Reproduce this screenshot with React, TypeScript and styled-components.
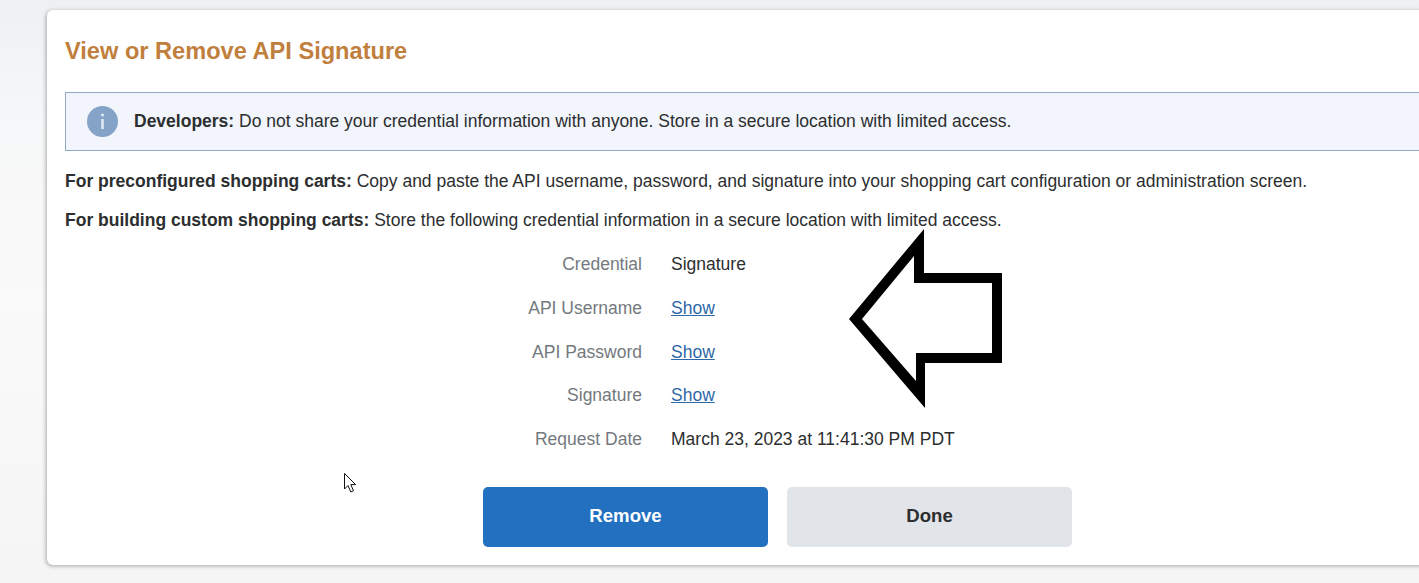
import styled, { createGlobalStyle } from 'styled-components';

const GlobalStyle = createGlobalStyle`
  html, body {
    margin: 0;
    padding: 0;
    height: 100%;
    overflow: hidden;
  }
  body {
    font-family: "Liberation Sans", Arial, sans-serif;
    color: #2c2e2f;
    background: #f5f5f6;
  }
`;

const Page = styled.div`
  position: relative;
  width: 1419px;
  height: 583px;
  overflow: hidden;
  padding: 10px 0 18px 47px;
  box-sizing: border-box;
  background: linear-gradient(180deg, #eef0f2 0, #f6f7f8 120px, #fafafa 300px, #f5f5f5 583px);
`;

const Card = styled.div`
  width: 1450px;
  height: 555px;
  box-sizing: border-box;
  padding: 28px 0 0 18px;
  background: #fff;
  border-radius: 6px;
  box-shadow: -1px 1px 4px rgba(0, 0, 0, 0.32);
`;

const Title = styled.h2`
  margin: 0;
  font-size: 23.6px;
  line-height: 26px;
  font-weight: 700;
  color: #c17f3e;
`;

const Notice = styled.div`
  display: flex;
  align-items: center;
  gap: 16px;
  box-sizing: border-box;
  height: 59px;
  margin-top: 28px;
  padding-left: 21px;
  background: #f2f5fc;
  border: 1px solid #8fa9c7;
  font-size: 17.5px;
`;

const InfoIcon = styled.svg`
  width: 31px;
  height: 31px;
  flex: none;
  margin-top: -1px;
`;

const Para = styled.p<{ $top: number }>`
  margin: ${(p) => p.$top}px 0 0;
  font-size: 17.5px;
  line-height: 20px;
  white-space: nowrap;
`;

const Details = styled.dl`
  display: grid;
  grid-template-columns: 577px auto;
  grid-auto-rows: 43.75px;
  column-gap: 29px;
  align-items: center;
  margin: 12.75px 0 0;
  font-size: 17.5px;
`;

const Label = styled.dt`
  text-align: right;
  color: #74797e;
`;

const Value = styled.dd`
  margin: 0;
`;

const ShowLink = styled.a`
  color: #2f68a8;
  text-decoration: underline;
`;

const Actions = styled.div`
  display: flex;
  gap: 19px;
  margin: 25.25px 0 0 418px;
`;

const Button = styled.button<{ $primary?: boolean }>`
  width: 285px;
  height: 60px;
  padding: 0 0 2px;
  border: 0;
  border-radius: 5px;
  font-family: inherit;
  font-size: 18.6px;
  font-weight: 700;
  background: ${(p) => (p.$primary ? '#2270bf' : '#e1e4e8')};
  color: ${(p) => (p.$primary ? '#fff' : '#2c2e2f')};
`;

const Arrow = styled.svg`
  position: absolute;
  left: 840px;
  top: 220px;
  width: 180px;
  height: 200px;
`;

const Cursor = styled.svg`
  position: absolute;
  left: 343px;
  top: 472px;
  width: 16px;
  height: 22px;
`;

const rows = [
  { label: 'API Username' },
  { label: 'API Password' },
  { label: 'Signature' },
];

export default function App() {
  return (
    <Page>
      <GlobalStyle />
      <Card>
        <Title>View or Remove API Signature</Title>
        <Notice>
          <InfoIcon viewBox="0 0 31 31">
            <circle cx="15.5" cy="15.5" r="15.5" fill="#84a3c7" />
            <circle cx="15.5" cy="9" r="1.6" fill="#dfe7f1" />
            <rect x="14.2" y="13" width="2.6" height="10" fill="#dfe7f1" />
          </InfoIcon>
          <span>
            <b>Developers:</b> Do not share your credential information with anyone. Store in a secure location with limited access.
          </span>
        </Notice>
        <Para $top={20}>
          <b>For preconfigured shopping carts:</b> Copy and paste the API username, password, and signature into your shopping cart configuration or administration screen.
        </Para>
        <Para $top={19}>
          <b>For building custom shopping carts:</b> Store the following credential information in a secure location with limited access.
        </Para>
        <Details>
          <Label>Credential</Label>
          <Value>Signature</Value>
          {rows.map((row) => (
            <Row key={row.label} label={row.label} />
          ))}
          <Label>Request Date</Label>
          <Value>March 23, 2023 at 11:41:30 PM PDT</Value>
        </Details>
        <Actions>
          <Button $primary>Remove</Button>
          <Button>Done</Button>
        </Actions>
      </Card>
      <Arrow viewBox="840 220 180 200">
        <path
          fillRule="evenodd"
          fill="#000"
          d="M849 319 L924 229 L924 273 L1002 273 L1002 363 L925 363 L925 408 Z M862 319 L916 381 L916 353 L992 353 L992 283 L914 283 L914 256 Z"
        />
      </Arrow>
      <Cursor viewBox="0 0 16 22">
        <path
          d="M1.5 1.5 L1.5 17 L5 13.5 L7.8 20 L10.5 18.8 L7.8 12.6 L12.6 12.6 Z"
          fill="#fff"
          stroke="#111"
          strokeWidth="1"
        />
      </Cursor>
    </Page>
  );
}

function Row({ label }: { label: string }) {
  return (
    <>
      <Label>{label}</Label>
      <Value>
        <ShowLink href="#">Show</ShowLink>
      </Value>
    </>
  );
}
